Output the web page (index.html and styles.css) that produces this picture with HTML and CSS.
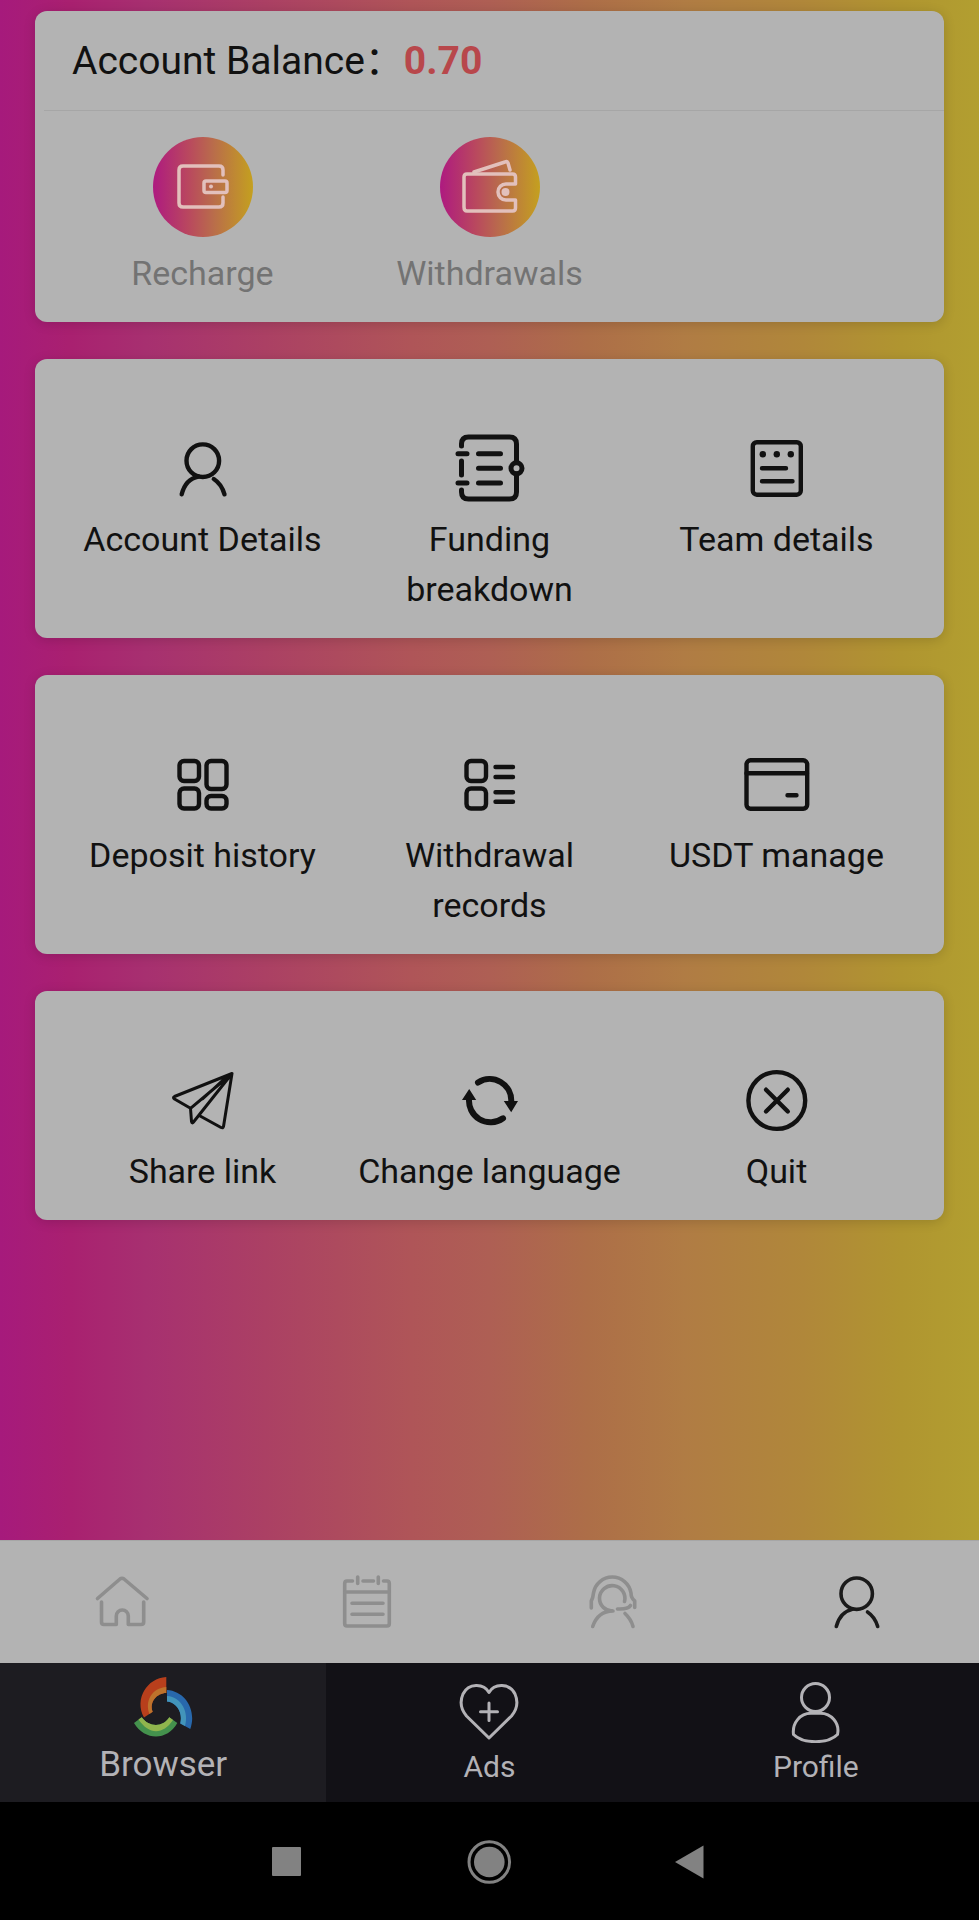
FILE: index.html
```html
<!DOCTYPE html>
<html lang="en">
<head>
    <meta charset="UTF-8">
    <meta name="viewport" content="width=device-width, initial-scale=1.0">
    <title>Profile</title>
    <link rel="stylesheet" href="styles.css">
</head>
<body>
    <main class="content">
        <section class="card">
            <h1 class="balance">Account Balance<span class="colon">：</span><strong class="amount">0.70</strong></h1>
            <div class="grid wallet">
                <a class="item muted" href="#">
                    <svg class="round-icon" viewBox="0 0 100 100">
                        <path d="M70 38V33Q70 29 66 29H30Q26 29 26 33V66Q26 70 30 70H66Q70 70 70 66V60"/>
                        <rect x="51" y="44" width="23" height="11.5" rx="2"/>
                        <circle class="dot" cx="58" cy="49.5" r="2"/>
                    </svg>
                    <span>Recharge</span>
                </a>
                <a class="item muted" href="#">
                    <svg class="round-icon" viewBox="0 0 100 100">
                        <path d="M75.5 47V40Q75.5 37 72.5 37H27Q24 37 24 40V70Q24 74 27 74H72.5Q75.5 74 75.5 71V63H66A8 8 0 0 1 66 47Z"/>
                        <path d="M34 35L65 25Q67 24 68 26L70 33"/>
                        <circle class="dot" cx="65.5" cy="55" r="4"/>
                    </svg>
                    <span>Withdrawals</span>
                </a>
            </div>
        </section>

        <section class="card">
            <div class="grid">
                <a class="item" href="#">
                    <svg class="icon" viewBox="0 0 80 80">
                        <circle cx="39.8" cy="32.7" r="16.3"/>
                        <path d="M18.7 66.3Q22.5 51 35.5 48.6M50.8 51Q58.5 56 61.5 66.3"/>
                    </svg>
                    <span>Account Details</span>
                </a>
                <a class="item" href="#">
                    <svg class="icon bold" viewBox="0 0 80 80">
                        <path d="M11.5 18V16Q11.5 9 18.5 9H59.5Q66.5 9 66.5 16V34.6M66.5 46V64Q66.5 71 59.5 71H18.5Q11.5 71 11.5 64V62"/>
                        <path d="M8 25.7H17M8 55H17M11.5 33V47M28.5 25.7H50.5M28.5 40.3H50.5M28.5 55H50.5"/>
                        <circle cx="66.5" cy="40.3" r="5.5"/>
                    </svg>
                    <span>Funding breakdown</span>
                </a>
                <a class="item" href="#">
                    <svg class="icon" viewBox="0 0 80 80">
                        <rect x="15.8" y="14.2" width="48" height="52.5" rx="4"/>
                        <path d="M25 40.3H49M25 53.3H55.5"/>
                        <circle class="dot" cx="25.8" cy="26.3" r="3.2"/>
                        <circle class="dot" cx="39.8" cy="26.3" r="3.2"/>
                        <circle class="dot" cx="53.8" cy="26.3" r="3.2"/>
                    </svg>
                    <span>Team details</span>
                </a>
            </div>
        </section>

        <section class="card">
            <div class="grid">
                <a class="item" href="#">
                    <svg class="icon" viewBox="0 0 80 80">
                        <rect x="16.5" y="17" width="19.5" height="20" rx="4.5"/>
                        <rect x="16.5" y="44.5" width="19.5" height="20" rx="4.5"/>
                        <rect x="43.5" y="17" width="20" height="28" rx="4.5"/>
                        <rect x="43.5" y="52" width="20" height="12.5" rx="4.5"/>
                    </svg>
                    <span>Deposit history</span>
                </a>
                <a class="item" href="#">
                    <svg class="icon" viewBox="0 0 80 80">
                        <rect x="16.5" y="17" width="19.5" height="20" rx="4.5"/>
                        <rect x="16.5" y="44.5" width="19.5" height="20" rx="4.5"/>
                        <path d="M45.5 23H63M45.5 33H63M45.5 48.3H63M45.5 57.7H63"/>
                    </svg>
                    <span>Withdrawal records</span>
                </a>
                <a class="item" href="#">
                    <svg class="icon" viewBox="0 0 80 80">
                        <rect x="9.5" y="16.3" width="60.7" height="48.5" rx="4"/>
                        <path d="M9.5 29.3H70M50.5 51.3H59.5"/>
                    </svg>
                    <span>USDT manage</span>
                </a>
            </div>
        </section>

        <section class="card">
            <div class="grid">
                <a class="item" href="#">
                    <svg class="icon light" viewBox="0 0 80 80">
                        <path d="M69 13.5L11.5 36.5Q9.5 37.5 11.5 39L27.5 48.3ZM27.5 48.3L28.5 61.5Q29 64 30.5 62L69 13.5L60.5 66.5Q60 68.5 58 67.5L36.2 55.5M65.5 15L39.5 39"/>
                    </svg>
                    <span>Share link</span>
                </a>
                <a class="item" href="#">
                    <svg class="icon heavy" viewBox="0 0 80 80">
                        <path d="M28 22.5A21.5 21.5 0 0 1 61.2 42M53 58.3A21.5 21.5 0 0 1 19.2 38"/>
                        <path class="dot" d="M53.8 41H68L61.2 52.3ZM12 40H26.2L19.2 29Z"/>
                    </svg>
                    <span>Change language</span>
                </a>
                <a class="item" href="#">
                    <svg class="icon" viewBox="0 0 80 80">
                        <circle cx="39.8" cy="40.5" r="28.4"/>
                        <path d="M29 29.7L50.8 51.5M50.8 29.7L29 51.5"/>
                    </svg>
                    <span>Quit</span>
                </a>
            </div>
        </section>
    </main>

    <nav class="tabs">
        <a class="tab" href="#" aria-label="Home">
            <svg class="icon" viewBox="0 0 80 80">
                <path d="M15.5 36.5L38 17Q40 15.5 42 17L65 36.5"/>
                <path d="M19.5 40V60Q19.5 62.5 22 62.5H34.3V54A6 6 0 0 1 46.3 54V62.5H59Q61.7 62.5 61.7 60V40"/>
            </svg>
        </a>
        <a class="tab" href="#" aria-label="Orders">
            <svg class="icon" viewBox="0 0 80 80">
                <path d="M25.5 19H20Q17.7 19 17.7 21.5V61.5Q17.7 64 20 64H60Q62.3 64 62.3 61.5V21.5Q62.3 19 60 19H56.5M36 19H46.5M30.7 15V21.5M51.3 15V21.5"/>
                <path d="M18 30H62M25 41.3H56M25 52.3H56"/>
            </svg>
        </a>
        <a class="tab" href="#" aria-label="Service">
            <svg class="icon" viewBox="0 0 80 80">
                <path d="M52.5 39.5A12.7 12.7 0 1 0 41 49Q26 49 20.7 64.5M53 51.5Q59 57 61 64.5"/>
                <path d="M19.3 46V39Q21 36 21.5 31A19 19 0 0 1 59 31Q59 36 62.7 39V45.5M58.5 43.5Q56 47.5 45.5 47"/>
            </svg>
        </a>
        <a class="tab active" href="#" aria-label="My account">
            <svg class="icon" viewBox="0 0 80 80">
                <circle cx="39.7" cy="31.7" r="15.7"/>
                <path d="M19.3 64.5Q23 50 36 47M50.5 50Q58 55 60.7 64.5"/>
            </svg>
        </a>
    </nav>

    <nav class="app-bar">
        <a class="app-item current" href="#">
            <svg class="app-icon logo" viewBox="0 0 64 64">
                <path fill="#b83f1c" d="M35.3 2C16 3 3 24 13 42.5L21.7 36.7C18 27 26 18 35.3 18Z"/>
                <path fill="#bd722c" d="M35.3 12C21 13 13.5 26 18.5 39L21.7 36.7C18 27 26 18 35.3 18Z"/>
                <path fill="#2868ac" d="M36 15C54 16 66 35 59.3 54L49.3 48.5C52 38 46 27.5 36 26.5Z"/>
                <path fill="#4294ba" d="M36 21C51 22 58 38 54 51L49.3 48.5C52 38 46 27.5 36 26.5Z"/>
                <path fill="#44914d" d="M3 48C14 66 36 66 46.3 48L38.3 42.3C32 52.5 18 52.5 10.7 42.3Z"/>
                <path fill="#90b44d" d="M7.5 44.5C18 60 32 60 42 45L38.3 42.3C32 52.5 18 52.5 10.7 42.3Z"/>
            </svg>
            <span>Browser</span>
        </a>
        <a class="app-item" href="#">
            <svg class="app-icon" viewBox="0 0 64 64">
                <path d="M32 13.5C26.5 4 11.5 4 6 15C2.5 23 4.5 31 9.5 37L32 59L54.5 37C59.5 31 61.5 23 58 15C52.5 4 37.5 4 32 13.5Z"/>
                <path d="M23.5 32.7H40.5M32 24V41.5"/>
            </svg>
            <span>Ads</span>
        </a>
        <a class="app-item" href="#">
            <svg class="app-icon" viewBox="0 0 64 64">
                <circle cx="31.5" cy="18.5" r="14"/>
                <path d="M27 34.3H36.5C47 34.3 56 44 53.5 55.5C44 65 19 65 9.5 55.5C8 44 16 34.3 27 34.3Z"/>
            </svg>
            <span>Profile</span>
        </a>
    </nav>

    <div class="system-bar">
        <button type="button" aria-label="Recent apps">
            <svg viewBox="0 0 60 60"><rect x="13" y="16" width="29" height="29" rx="1"/></svg>
        </button>
        <button type="button" aria-label="Home screen">
            <svg viewBox="0 0 60 60"><circle cx="29.3" cy="31" r="15.3"/><circle class="ring" cx="29.3" cy="31" r="20.3"/></svg>
        </button>
        <button type="button" aria-label="Back">
            <svg viewBox="0 0 60 60"><path d="M14 31L42.5 14.5V47.5Z"/></svg>
        </button>
    </div>
</body>
</html>
```

FILE: styles.css
```css
* {
    box-sizing: border-box;
}
body {
    display: flex;
    flex-direction: column;
    min-height: 100vh;
    margin: 0;
    font-family: Roboto, "Noto Sans CJK SC", sans-serif;
    font-size: 34px;
    line-height: 50px;
    color: #111;
    background: #000;
}
a {
    color: inherit;
    text-decoration: none;
}
svg {
    display: block;
    fill: none;
    stroke: currentColor;
    stroke-linecap: round;
    stroke-linejoin: round;
}
.content {
    flex: 1;
    display: flex;
    flex-direction: column;
    gap: 37px;
    padding: 11px 35px 37px;
    background: linear-gradient(90deg, #a61a7c 0%, #a92070 7%, #a73070 15%, #ab4064 27%, #af5558 42%, #ae5f54 50%, #ad6e48 60%, #b07c44 70%, #b0873a 82%, #b09530 92%, #b29f30 100%);
}
.card {
    border-radius: 12px;
    background: #b3b3b3;
    box-shadow: 0 2px 12px rgba(0, 0, 0, 0.15);
}
.balance {
    margin: 0 0 0 9px;
    padding: 2px 0 0 28px;
    border-bottom: 1px solid #a6a6a6;
    font-size: 39px;
    font-weight: 400;
    line-height: 97px;
}
.colon {
    font-family: "Noto Sans CJK SC", sans-serif;
    line-height: 1;
}
.amount {
    font-weight: 700;
    color: #b8474b;
}
.grid {
    display: grid;
    grid-template-columns: repeat(3, 1fr);
    padding: 69px 24px 24px;
}
.item {
    display: flex;
    flex-direction: column;
    align-items: center;
    gap: 6px;
    text-align: center;
}
.wallet {
    padding-top: 26px;
}
.wallet .item {
    gap: 11px;
}
.muted {
    color: #737373;
}
.icon {
    width: 80px;
    height: 80px;
    stroke-width: 4.4;
}
.bold {
    stroke-width: 5;
}
.light {
    stroke-width: 3;
}
.heavy {
    stroke-width: 6;
}
.dot {
    fill: currentColor;
    stroke: none;
}
.round-icon {
    width: 100px;
    height: 100px;
    border-radius: 50%;
    color: #e2c0bc;
    background: linear-gradient(90deg, #ae1a80, #b9475f 35%, #b96c4b 60%, #c4a01f);
    stroke-width: 3.5;
}
.tabs {
    display: grid;
    grid-template-columns: repeat(4, 1fr);
    padding: 21px 0;
    border-top: 1px solid #a6a6a6;
    background: #b3b3b3;
}
.tab {
    display: flex;
    justify-content: center;
    color: #8e8e8e;
}
.tab .icon {
    stroke-width: 3.6;
}
.tab.active {
    color: #1a1a1a;
}
.app-bar {
    display: grid;
    grid-template-columns: repeat(3, 1fr);
    height: 139px;
    color: #b3b2b6;
    background: #121116;
}
.app-item {
    display: flex;
    flex-direction: column;
    justify-content: flex-end;
    align-items: center;
    gap: 4px;
    padding-bottom: 15px;
    font-size: 30px;
    line-height: 40px;
}
.app-item.current {
    background: #1d1c21;
    font-size: 35px;
    line-height: 44px;
}
.app-icon {
    width: 64px;
    height: 64px;
    stroke-width: 3;
}
.logo {
    stroke: none;
}
.system-bar {
    display: flex;
    justify-content: center;
    align-items: center;
    gap: 141px;
    height: 118px;
}
.system-bar button {
    width: 60px;
    height: 60px;
    padding: 0;
    border: none;
    color: #828282;
    background: none;
}
.system-bar svg {
    fill: currentColor;
    stroke: none;
}
.system-bar .ring {
    fill: none;
    stroke: currentColor;
    stroke-width: 3;
}
```
